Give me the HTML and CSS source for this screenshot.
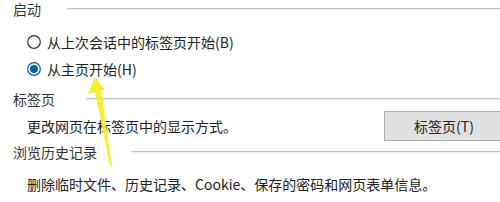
FILE: index.html
```html
<!DOCTYPE html>
<html lang="zh-CN">
<head>
  <meta charset="UTF-8">
  <title>Internet 选项</title>
  <link rel="stylesheet" href="styles.css">
</head>
<body>
  <div class="panel">
    <div class="group-title title-start">
      <span>启动</span>
      <div class="rule"></div>
    </div>
    <label class="radio-row first">
      <svg class="radio" width="14" height="14" viewBox="0 0 14 14">
        <circle cx="7" cy="7" r="6.3" fill="#fff" stroke="#333" stroke-width="1.2"/>
      </svg>
      <span>从上次会话中的标签页开始(B)</span>
    </label>
    <label class="radio-row">
      <svg class="radio" width="14" height="14" viewBox="0 0 14 14">
        <circle cx="7" cy="7" r="6.3" fill="#fff" stroke="#1a5a9c" stroke-width="1.2"/>
        <circle cx="7" cy="7" r="4" fill="#0063b1"/>
      </svg>
      <span>从主页开始(H)</span>
    </label>

    <div class="group-title title-tabs">
      <span>标签页</span>
      <div class="rule"></div>
    </div>
    <div class="desc-row">
      <span>更改网页在标签页中的显示方式。</span>
      <button class="btn">标签页(T)</button>
    </div>

    <div class="group-title title-history">
      <span>浏览历史记录</span>
      <div class="rule"></div>
    </div>
    <div class="desc-row last">
      <span>删除临时文件、历史记录、Cookie、保存的密码和网页表单信息。</span>
    </div>

    <svg class="arrow" width="500" height="202" viewBox="0 0 500 202">
      <polygon points="95,76 88,93 95,91 110,165 112,165 101,89 105,89" fill="#f5f032"/>
    </svg>
  </div>
</body>
</html>
```

FILE: styles.css
```css
body {
  margin: 0;
  background: #fff;
  font-family: "Microsoft YaHei", "Noto Sans CJK SC", "Noto Sans", sans-serif;
  font-size: 14px;
  line-height: 16px;
  color: #222;
  overflow: hidden;
}
.panel {
  position: relative;
  width: 500px;
  height: 202px;
}
.group-title {
  display: flex;
  align-items: center;
  height: 16px;
  padding-left: 13px;
  color: #333;
}
.title-start {
  margin-top: 1px;
}
.group-title .rule {
  flex: 1;
  height: 0;
  border-top: 1px solid #c4c4c4;
  border-bottom: 1px solid #ececec;
}
.title-start .rule {
  margin-left: 26px;
}
.title-tabs {
  margin-top: 9px;
}
.title-tabs .rule {
  margin-left: 31px;
}
.title-history {
  margin-top: 3px;
}
.title-history .rule {
  margin-left: 34px;
}
.radio-row {
  display: flex;
  align-items: center;
  height: 27px;
  padding-left: 27px;
}
.radio-row.first {
  margin-top: 11px;
}
.radio {
  margin-right: 6px;
}
.desc-row {
  display: flex;
  align-items: center;
  justify-content: space-between;
  height: 30px;
  padding-left: 27px;
  margin-top: 4px;
}
.desc-row.last {
  margin-top: 11px;
  height: 26px;
}
.btn {
  width: 120px;
  height: 30px;
  margin-right: -4px;
  background: #e1e1e1;
  border: 1px solid #adadad;
  font-family: inherit;
  font-size: 14px;
  color: #222;
  padding: 0;
}
.arrow {
  position: absolute;
  left: 0;
  top: 0;
  pointer-events: none;
}
```
